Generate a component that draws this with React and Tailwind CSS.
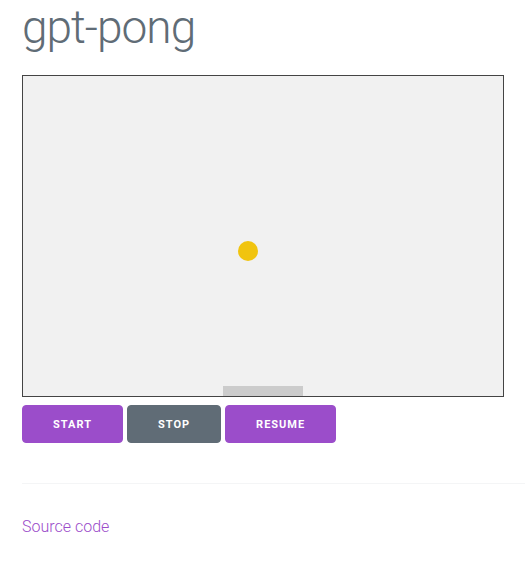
export default function App() {
  return (
    <div
      className="min-h-[562px] bg-white pl-[22px] text-[#606c76]"
      style={{ fontFamily: "Roboto, 'Liberation Sans', sans-serif" }}
    >
      <h1 className="m-0 text-[46px] font-light leading-[55.2px] tracking-[-1px] text-[#606c76]">
        gpt-pong
      </h1>
      <div className="mt-[20px] h-[322px] w-[482px] border border-[#444444] bg-[#f1f1f1]">
        <svg width="480" height="320" viewBox="0 0 480 320" className="block">
          <circle cx="225" cy="175" r="10" fill="#f1c40f" />
          <rect x="200" y="310" width="80" height="10" fill="#cccccc" />
        </svg>
      </div>
      <div className="mt-[8px] flex gap-[4px]">
        <button className="h-[38px] overflow-visible rounded-[4px] border border-[#9b4dca] bg-[#9b4dca] px-[30px] text-[11px] font-bold uppercase leading-[38px] tracking-[1px] text-white">
          Start
        </button>
        <button className="h-[38px] overflow-visible rounded-[4px] border border-[#606c76] bg-[#606c76] px-[30px] text-[11px] font-bold uppercase leading-[38px] tracking-[1px] text-white">
          Stop
        </button>
        <button className="h-[38px] overflow-visible rounded-[4px] border border-[#9b4dca] bg-[#9b4dca] px-[30px] text-[11px] font-bold uppercase leading-[38px] tracking-[1px] text-white">
          Resume
        </button>
      </div>
      <hr className="mt-[40px] mb-[30px] border-0 border-t border-[#f4f5f6]" />
      <a href="#" className="text-[16px] font-light leading-[25.6px] text-[#9b4dca]">
        Source code
      </a>
    </div>
  );
}
